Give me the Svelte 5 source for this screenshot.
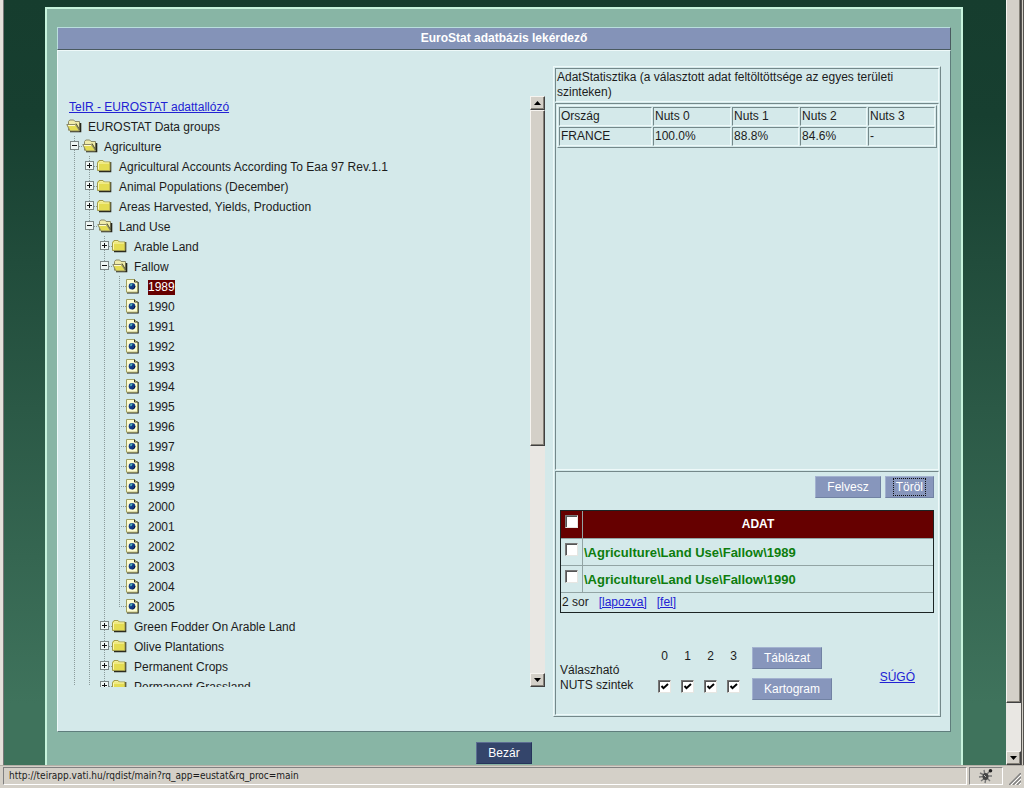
<script lang="ts">
  type Node = { label: string; open?: boolean; children?: Node[]; folder?: boolean };

  const years = Array.from({ length: 17 }, (_, i) => ({ label: String(1989 + i) }));

  let tree: Node[] = $state([
    {
      label: 'Agriculture', folder: true, open: true, children: [
        { label: 'Agricultural Accounts According To Eaa 97 Rev.1.1', folder: true },
        { label: 'Animal Populations (December)', folder: true },
        { label: 'Areas Harvested, Yields, Production', folder: true },
        {
          label: 'Land Use', folder: true, open: true, children: [
            { label: 'Arable Land', folder: true },
            { label: 'Fallow', folder: true, open: true, children: years },
            { label: 'Green Fodder On Arable Land', folder: true },
            { label: 'Olive Plantations', folder: true },
            { label: 'Permanent Crops', folder: true },
            { label: 'Permanent Grassland', folder: true }
          ]
        }
      ]
    }
  ]);

  let selected = $state('1989');

  const stats = [{ country: 'FRANCE', values: ['100.0%', '88.8%', '84.6%', '-'] }];
  let rows = $state([
    { path: '\\Agriculture\\Land Use\\Fallow\\1989', checked: false },
    { path: '\\Agriculture\\Land Use\\Fallow\\1990', checked: false }
  ]);
  let all = $state(false);
  let levels = $state([true, true, true, true]);

  function toggleAll() {
    for (const row of rows) row.checked = all;
  }
</script>

{#snippet closedFolder()}
  <svg class="icon" viewBox="0 0 16 16" width="16" height="16" aria-hidden="true">
    <path d="M2 13.5h11.5V4" fill="none" stroke="#2b2b20" stroke-width="1.6" />
    <path d="M.5 12.5v-8l1.5-2h4l1.5 1.5h5.5v8.5z" fill="#e4dc52" stroke="#a19b4c" />
    <path d="M1.5 11.5v-6.5h10.5" fill="none" stroke="#fbf8b5" />
    <path d="M2.5 3.5h3.5" stroke="#f4efa0" />
  </svg>
{/snippet}

{#snippet openFolder()}
  <svg class="icon" viewBox="0 0 16 16" width="16" height="16" aria-hidden="true">
    <path d="M2.5 12.5v-9l1.3-1.5h3.9l1.3 1.5h4.5v10" fill="#f0ecaa" stroke="#8b8a68" />
    <path d="M4 13.5h10.5V5" fill="none" stroke="#252519" stroke-width="1.6" />
    <path d="M.8 6.5h8.7l4 6.5H4z" fill="#e4dc52" stroke="#8b8a68" />
    <path d="M2 7.5h7" stroke="#fffbd0" />
    <path d="M10 5.5l3.5 6" stroke="#55532c" />
  </svg>
{/snippet}

{#snippet documentIcon()}
  <svg class="icon" viewBox="0 0 16 16" width="16" height="16" aria-hidden="true">
    <path d="M1 14.8h11V4" fill="none" stroke="#1d1d18" stroke-width="1.4" />
    <path d="M.5 1.5h8l3 3v9.7H.5z" fill="#fdfdd2" stroke="#a0a060" />
    <path d="M8.5 1.5v2.5H12" fill="none" stroke="#33331f" />
    <circle cx="6" cy="8.2" r="3.3" fill="#123a86" />
    <path d="M4 7.2c.5-1.6 1.6-2.1 2.6-1.4l-.8 1.9-1 .9z" fill="#4fb0b8" />
    <path d="M6.5 11c1.6-.4 2.4-1.4 2.4-2.9" stroke="#071335" fill="none" />
  </svg>
{/snippet}

{#snippet branch(nodes: Node[])}
  <ul class="branch">
    {#each nodes as node}
      <li>
        <div class="row">
          {#if node.folder}
            <button class="toggle" aria-label={node.label} aria-expanded={!!node.open} onclick={() => (node.open = !node.open)}>
              <svg viewBox="0 0 9 9" width="9" height="9" aria-hidden="true">
                <rect x=".5" y=".5" width="8" height="8" fill="#eef6f4" stroke="#7c8786" />
                <path d={node.open ? 'M2 4.5h5' : 'M2 4.5h5M4.5 2v5'} stroke="#111" />
              </svg>
            </button>
            <span class="stub"></span>
            {#if node.open}{@render openFolder()}{:else}{@render closedFolder()}{/if}
            <span class="name">{node.label}</span>
          {:else}
            <span class="stub leaf"></span>
            {@render documentIcon()}
            <button class="name pick" class:selected={selected === node.label} onclick={() => (selected = node.label)}>{node.label}</button>
          {/if}
        </div>
        {#if node.open && node.children}{@render branch(node.children)}{/if}
      </li>
    {/each}
  </ul>
{/snippet}

{#snippet arrow(up: boolean)}
  <span class="arrow">
    <svg viewBox="0 0 7 4" width="7" height="4" aria-hidden="true"><path d={up ? 'M0 4h7L3.5 0z' : 'M0 0h7L3.5 4z'} /></svg>
  </span>
{/snippet}

<div class="window">
  <div class="viewport">
    <main class="page">
      <div class="frame">
        <h1>EuroStat adatbázis lekérdező</h1>
        <div class="content">
          <section class="browser">
            <div class="tree">
              <a class="head" href="#top">TeIR - EUROSTAT adattallózó</a>
              <div class="row">{@render openFolder()}<span class="name">EUROSTAT Data groups</span></div>
              <div class="root">{@render branch(tree)}</div>
            </div>
            <div class="scrollbar">
              {@render arrow(true)}
              <span class="thumb"></span>
              <span class="track"></span>
              {@render arrow(false)}
            </div>
          </section>

          <section class="panel">
            <div class="cell caption">AdatStatisztika (a választott adat feltöltöttsége az egyes területi szinteken)</div>
            <div class="cell stats">
              <table class="nuts">
                <thead>
                  <tr><th class="country">Ország</th><th class="first">Nuts 0</th><th>Nuts 1</th><th>Nuts 2</th><th>Nuts 3</th></tr>
                </thead>
                <tbody>
                  {#each stats as s}
                    <tr><td>{s.country}</td>{#each s.values as v}<td>{v}</td>{/each}</tr>
                  {/each}
                </tbody>
              </table>
            </div>
            <div class="cell chosen">
              <div class="actions">
                <button class="btn">Felvesz</button>
                <button class="btn tight"><span class="focus">Töröl</span></button>
              </div>
              <table class="data">
                <thead>
                  <tr>
                    <th class="tick"><input type="checkbox" aria-label="ADAT" bind:checked={all} onchange={toggleAll} /></th>
                    <th>ADAT</th>
                  </tr>
                </thead>
                <tbody>
                  {#each rows as row, i}
                    <tr>
                      <td class="tick"><input id="row{i}" type="checkbox" bind:checked={row.checked} /></td>
                      <td class="path"><label for="row{i}">{row.path}</label></td>
                    </tr>
                  {/each}
                </tbody>
                <tfoot>
                  <tr><td colspan="2"><span class="foot"><span>2 sor</span><a href="#pages">[lapozva]</a><a href="#up">[fel]</a></span></td></tr>
                </tfoot>
              </table>
              <div class="levels">
                <div class="legend">Válaszható<br />NUTS szintek</div>
                <div class="checks">
                  {#each levels as _, i}
                    <label>{i}<input type="checkbox" bind:checked={levels[i]} /></label>
                  {/each}
                </div>
                <div class="outputs">
                  <button class="btn">Táblázat</button>
                  <button class="btn">Kartogram</button>
                </div>
                <a class="help" href="#help">SÚGÓ</a>
              </div>
            </div>
          </section>
        </div>
        <button class="close">Bezár</button>
      </div>
    </main>
    <div class="scrollbar outer">
      <span class="thumb"></span>
      <span class="track"></span>
      {@render arrow(false)}
    </div>
  </div>
  <footer class="status">
    <span class="field url">http://teirapp.vati.hu/rqdist/main?rq_app=eustat&amp;rq_proc=main</span>
    <span class="field gear">
      <svg viewBox="0 0 16 16" width="16" height="16" aria-hidden="true">
        <path d="M2 5l4 2M1 9l5-.5M3 13l4-3M7 15l1-5M12 13l-3-3M14 8H9M6 2l1 5M9 6l3-3" stroke="#777" stroke-width="1.4" />
        <ellipse cx="7.5" cy="8.5" rx="3" ry="3.6" fill="#444" />
        <circle cx="12.5" cy="2.8" r="1.8" fill="#222" />
        <path d="M6 7l2 2" stroke="#bbb" />
      </svg>
    </span>
    <svg class="grip" viewBox="0 0 12 12" width="12" height="12" aria-hidden="true">
      <path d="M0 12L12 0M4 12l8-8M8 12l4-4" stroke="#808080" stroke-width="1.5" />
      <path d="M2 12L12 2M6 12l6-6M10 12l2-2" stroke="#fff" />
    </svg>
  </footer>
</div>

<style>
  :global(body) { margin: 0; }
  .window, .window * { box-sizing: border-box; }
  .window {
    --pane: #d4e9ea;
    --light: #eef9f9;
    --dark: #74888a;
    --chrome: #d4d0c8;
    display: flex;
    flex-direction: column;
    height: 100vh;
    font: 12px/15px "Liberation Sans", Arial, sans-serif;
    color: #1c1c1c;
    background: var(--chrome);
  }
  button, input { font: inherit; margin: 0; padding: 0; }
  a { color: #2222d4; }
  .viewport {
    flex: 1;
    min-height: 0;
    display: flex;
    border-left: 3px solid #e4e0da;
    border-right: 3px double #55534f;
    box-shadow: inset 1px 0 #777;
  }
  .page {
    flex: 1;
    min-width: 0;
    display: flex;
    padding: 7px 43px 0 41px;
    margin-left: 1px;
    background: linear-gradient(#163d2e, #173f30 15%, #3f735c 92%);
  }
  .frame {
    flex: 1;
    min-width: 0;
    display: flex;
    flex-direction: column;
    padding: 18px 10px 1px;
    background: #88b5a5;
    border: 2px solid #c6f3dc;
    border-bottom: 0;
  }
  h1 {
    margin: 0;
    font-size: 12px;
    line-height: 21px;
    text-align: center;
    color: #fff;
    background: #8493b8;
    border: 1px solid;
    border-color: #b9dedd #4a5a60 #4a5a60 #b9dedd;
  }
  .content {
    flex: 1;
    min-height: 0;
    display: grid;
    grid-template-columns: minmax(0, 479fr) minmax(0, 388fr);
    gap: 8px;
    padding: 15px 9px 14px 8px;
    background: var(--pane);
    border: 1px solid;
    border-color: var(--light) #5f7d7c #5f7d7c var(--light);
  }
  .browser { display: flex; min-height: 0; margin: 30px 0; }
  .tree { flex: 1; min-width: 0; overflow: hidden; }
  .head { display: block; width: fit-content; margin-left: 3px; padding-top: 2px; line-height: 18px; }
  .root { margin-left: 8px; }
  .branch {
    list-style: none;
    margin: 0;
    padding: 0;
    background: repeating-linear-gradient(#8b9b9b 0 1px, transparent 1px 2px) no-repeat 0 0 / 1px calc(100% - 10px);
  }
  .branch .branch { margin-left: 15px; }
  .row { display: flex; align-items: center; height: 20px; white-space: nowrap; }
  .icon { flex: none; margin-right: 6px; }
  .name { margin-top: 2px; }
  .toggle { display: flex; margin: 0 0 2px -4px; border: 0; background: none; }
  .stub { width: 3px; height: 1px; background: repeating-linear-gradient(90deg, #8b9b9b 0 1px, transparent 1px 2px); }
  .stub.leaf { width: 7px; }
  .pick { border: 0; background: none; color: inherit; line-height: 15px; }
  .selected { background: #660000; color: #fff; }

  .scrollbar { flex: none; width: 15px; display: flex; flex-direction: column; background: #e9e7e3; }
  .thumb, .arrow {
    background: var(--chrome);
    border: 1px solid;
    border-color: #f6f4f0 #404040 #404040 #f6f4f0;
    box-shadow: inset -1px -1px #858178;
  }
  .arrow { display: flex; align-items: center; justify-content: center; height: 14px; }
  .thumb { flex: 335; }
  .track { flex: 227; }
  .outer .thumb { flex: 703; border-top: 0; }
  .outer .track { flex: 48; }

  .panel {
    display: flex;
    flex-direction: column;
    gap: 1px;
    padding: 1px;
    border: 1px solid;
    border-color: var(--light) var(--dark) var(--dark) var(--light);
  }
  .cell { border: 1px solid; border-color: var(--dark) var(--light) var(--light) var(--dark); }
  .caption { padding: 1px 24px 1px 1px; }
  .stats { flex: 1; padding: 1px; }
  .nuts {
    width: 100%;
    table-layout: fixed;
    border-spacing: 1px;
    border: 1px solid;
    border-color: var(--light) var(--dark) var(--dark) var(--light);
  }
  .nuts th, .nuts td {
    height: 19px;
    padding: 1px;
    text-align: left;
    font-weight: normal;
    border: 1px solid;
    border-color: var(--dark) var(--light) var(--light) var(--dark);
  }
  .nuts .country { width: 25%; }
  .nuts .first { width: 21%; }
  .chosen { padding: 4px 4px 14px; }
  .actions { display: flex; justify-content: flex-end; gap: 4px; }
  .btn {
    height: 22px;
    padding: 0 11px;
    color: #fff;
    background: #8796bc;
    border: 1px solid;
    border-color: #a3b2cf #7182a3 #7182a3 #a3b2cf;
  }
  .tight { padding: 0 8px; }
  .focus { padding: 1px 2px; outline: 1px dotted #111; }
  .data {
    width: 100%;
    margin-top: 12px;
    outline: 1px solid #1b2424;
    outline-offset: -1px;
    border-collapse: collapse;
  }
  .data th, .data td { height: 27px; padding: 0 1px; text-align: left; border: 1px solid #92a4a4; }
  .data .path { font-size: 13px; font-weight: bold; color: #0d7d0d; }
  .data th { height: 28px; color: #fff; text-align: center; background: #660000; }
  .data .tick { width: 22px; vertical-align: top; text-align: center; padding-top: 4px; }
  .data tfoot td { height: 20px; }
  .foot { display: flex; gap: 10px; }
  input[type='checkbox'] {
    appearance: none;
    display: block;
    width: 13px;
    height: 13px;
    background: #fff;
    border: 1px solid;
    border-color: #777 #e6e6e2 #e6e6e2 #777;
    box-shadow: inset 1px 1px #555;
  }
  .tick input { margin: 0 3px; }
  input:checked {
    background: #fff url("data:image/svg+xml,%3Csvg xmlns='http://www.w3.org/2000/svg' viewBox='0 0 11 11'%3E%3Cpath d='M2.5 5l2 2.2L9 3' fill='none' stroke='%23000' stroke-width='2'/%3E%3C/svg%3E");
  }
  .levels { display: flex; margin-top: 34px; }
  .legend { width: 98px; padding-top: 16px; }
  .checks { display: flex; gap: 10px; padding-top: 2px; }
  .checks label { display: flex; flex-direction: column; align-items: center; gap: 16px; }
  .outputs { display: flex; flex-direction: column; align-items: flex-start; gap: 9px; margin-left: 12px; }
  .help { margin: 23px 19px 0 auto; }
  .close {
    align-self: center;
    height: 22px;
    margin-top: 10px;
    padding: 0 11px;
    color: #fff;
    background: #34456b;
    border: 1px solid;
    border-color: #5c6d92 #26345a #26345a #5c6d92;
  }
  .status {
    display: flex;
    align-items: center;
    gap: 2px;
    height: 23px;
    padding: 1px 3px 3px;
    border-top: 1px solid #b4b0a8;
    font: 10px/16px "DejaVu Sans Condensed", "DejaVu Sans", sans-serif;
  }
  .field { height: 18px; border: 1px solid; border-color: #808080 #fff #fff #808080; }
  .url { flex: 1; padding-left: 5px; }
  .gear { display: flex; justify-content: center; width: 34px; }
  .grip { margin-left: 4px; align-self: flex-end; }
</style>
